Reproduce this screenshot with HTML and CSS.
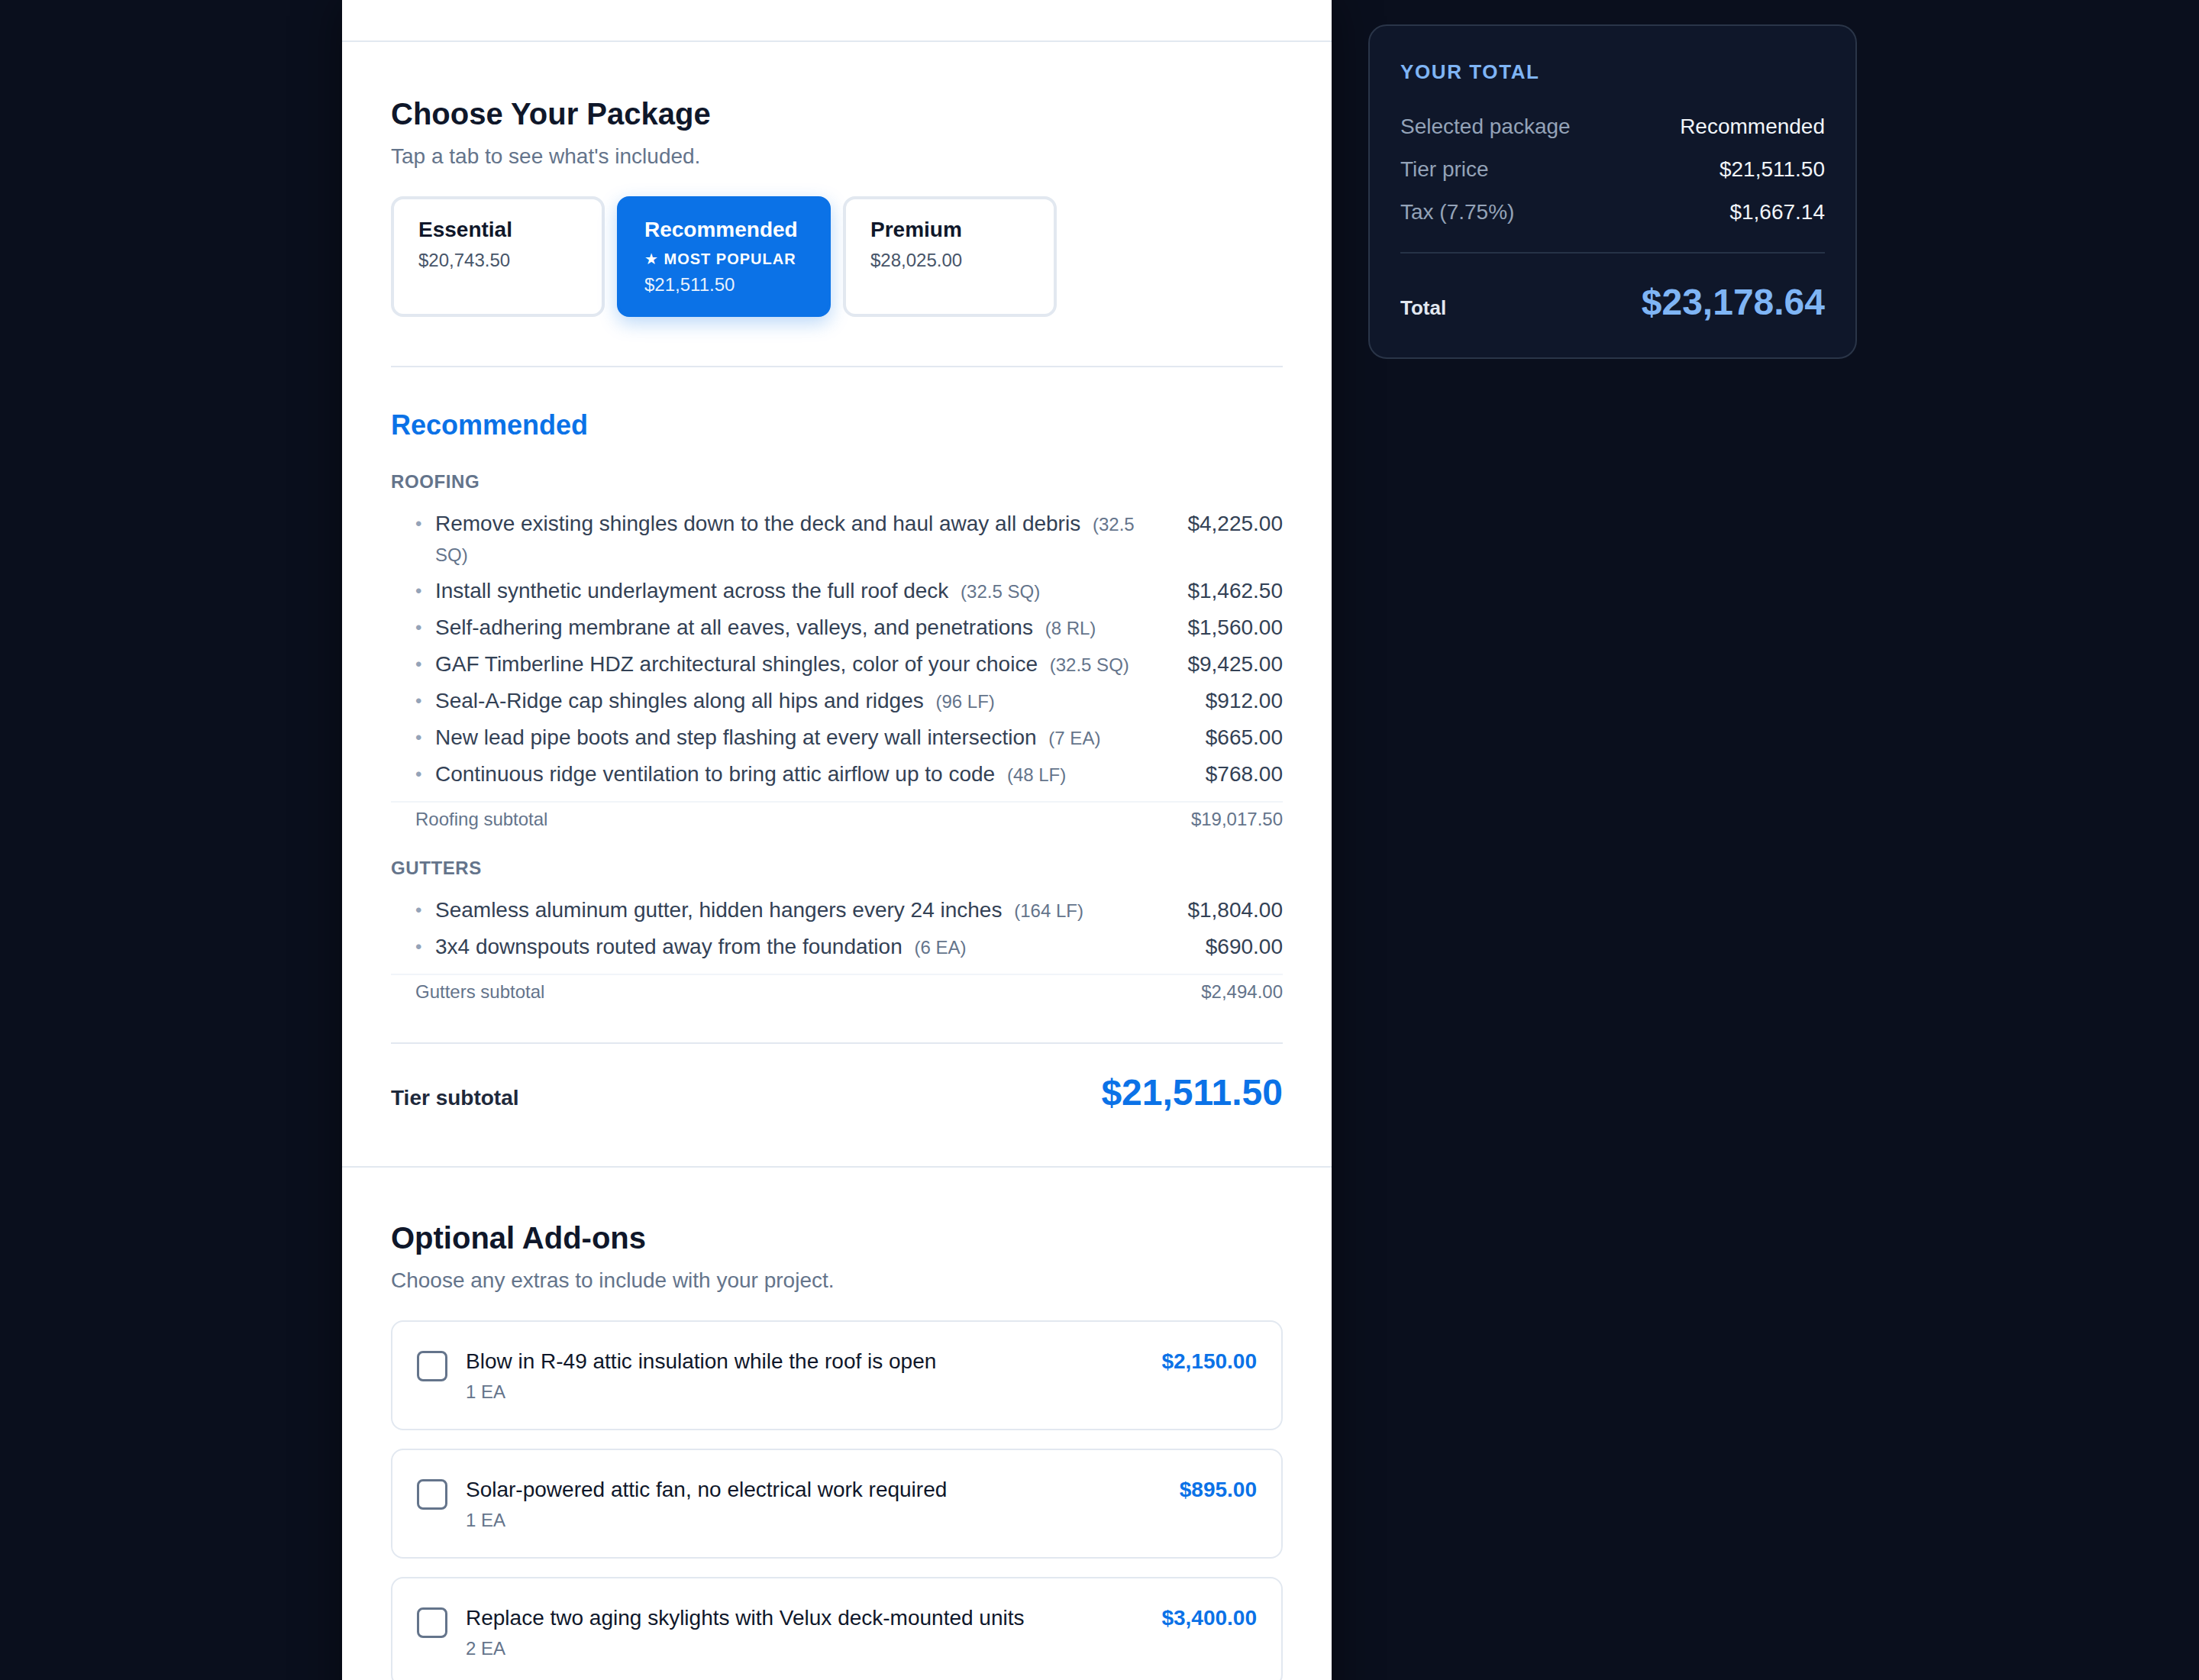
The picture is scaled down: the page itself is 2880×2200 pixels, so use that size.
FILE: index.html
```html
<!DOCTYPE html>
<html lang="en">
<head>
<meta charset="utf-8">
<title>Choose Your Package</title>
<link rel="stylesheet" href="styles.css">
</head>
<body>
<div class="page">
  <main class="panel">
    <div class="section-top"></div>

    <section class="section section-package">
      <h2 class="section-title">Choose Your Package</h2>
      <p class="section-sub">Tap a tab to see what's included.</p>

      <div class="tabs">
        <div class="tab">
          <div class="tab-title">Essential</div>
          <div class="tab-price">$20,743.50</div>
        </div>
        <div class="tab tab-active">
          <div class="tab-title">Recommended</div>
          <div class="tab-badge">★ MOST POPULAR</div>
          <div class="tab-price">$21,511.50</div>
        </div>
        <div class="tab">
          <div class="tab-title">Premium</div>
          <div class="tab-price">$28,025.00</div>
        </div>
      </div>

      <div class="details">
        <h3 class="tier-name">Recommended</h3>

        <div class="category">
          <div class="cat-label">Roofing</div>
          <ul class="items">
            <li class="item"><span class="bullet">•</span><span class="item-text">Remove existing shingles down to the deck and haul away all debris <span class="qty">(32.5 SQ)</span></span><span class="price">$4,225.00</span></li>
            <li class="item"><span class="bullet">•</span><span class="item-text">Install synthetic underlayment across the full roof deck <span class="qty">(32.5 SQ)</span></span><span class="price">$1,462.50</span></li>
            <li class="item"><span class="bullet">•</span><span class="item-text">Self-adhering membrane at all eaves, valleys, and penetrations <span class="qty">(8 RL)</span></span><span class="price">$1,560.00</span></li>
            <li class="item"><span class="bullet">•</span><span class="item-text">GAF Timberline HDZ architectural shingles, color of your choice <span class="qty">(32.5 SQ)</span></span><span class="price">$9,425.00</span></li>
            <li class="item"><span class="bullet">•</span><span class="item-text">Seal-A-Ridge cap shingles along all hips and ridges <span class="qty">(96 LF)</span></span><span class="price">$912.00</span></li>
            <li class="item"><span class="bullet">•</span><span class="item-text">New lead pipe boots and step flashing at every wall intersection <span class="qty">(7 EA)</span></span><span class="price">$665.00</span></li>
            <li class="item"><span class="bullet">•</span><span class="item-text">Continuous ridge ventilation to bring attic airflow up to code <span class="qty">(48 LF)</span></span><span class="price">$768.00</span></li>
          </ul>
          <div class="subtotal"><span>Roofing subtotal</span><span>$19,017.50</span></div>
        </div>

        <div class="category">
          <div class="cat-label">Gutters</div>
          <ul class="items">
            <li class="item"><span class="bullet">•</span><span class="item-text">Seamless aluminum gutter, hidden hangers every 24 inches <span class="qty">(164 LF)</span></span><span class="price">$1,804.00</span></li>
            <li class="item"><span class="bullet">•</span><span class="item-text">3x4 downspouts routed away from the foundation <span class="qty">(6 EA)</span></span><span class="price">$690.00</span></li>
          </ul>
          <div class="subtotal"><span>Gutters subtotal</span><span>$2,494.00</span></div>
        </div>

        <div class="tier-total">
          <span class="tier-label">Tier subtotal</span>
          <span class="tier-amount">$21,511.50</span>
        </div>
      </div>
    </section>

    <section class="section">
      <h2 class="section-title">Optional Add-ons</h2>
      <p class="section-sub">Choose any extras to include with your project.</p>

      <div class="addons">
        <div class="addon">
          <span class="checkbox"></span>
          <div class="addon-body">
            <div class="addon-title">Blow in R-49 attic insulation while the roof is open</div>
            <div class="addon-qty">1 EA</div>
          </div>
          <span class="addon-price">$2,150.00</span>
        </div>
        <div class="addon">
          <span class="checkbox"></span>
          <div class="addon-body">
            <div class="addon-title">Solar-powered attic fan, no electrical work required</div>
            <div class="addon-qty">1 EA</div>
          </div>
          <span class="addon-price">$895.00</span>
        </div>
        <div class="addon">
          <span class="checkbox"></span>
          <div class="addon-body">
            <div class="addon-title">Replace two aging skylights with Velux deck-mounted units</div>
            <div class="addon-qty">2 EA</div>
          </div>
          <span class="addon-price">$3,400.00</span>
        </div>
      </div>
    </section>
  </main>

  <aside class="sidebar">
    <div class="summary">
      <div class="summary-title">YOUR TOTAL</div>
      <div class="summary-rows">
        <div class="summary-row"><span class="summary-label">Selected package</span><span class="summary-value">Recommended</span></div>
        <div class="summary-row"><span class="summary-label">Tier price</span><span class="summary-value">$21,511.50</span></div>
        <div class="summary-row"><span class="summary-label">Tax (7.75%)</span><span class="summary-value">$1,667.14</span></div>
      </div>
      <div class="summary-total">
        <span class="summary-total-label">Total</span>
        <span class="summary-total-amount">$23,178.64</span>
      </div>
    </div>
  </aside>
</div>
</body>
</html>
```

FILE: styles.css
```css
* {
  box-sizing: border-box;
}

html,
body {
  margin: 0;
  padding: 0;
  height: 2200px;
  overflow: hidden;
}

body {
  background: #0a0f1d;
  font-family: "Liberation Sans", Arial, "DejaVu Sans", sans-serif;
  color: #0f172a;
}

.page {
  width: 1984px;
  margin: 0 auto;
  display: grid;
  grid-template-columns: 1296px 640px;
  gap: 48px;
  align-items: start;
}

/* ---------- main panel ---------- */

.panel {
  background: #ffffff;
  min-height: 2200px;
  box-shadow: 0 0 60px rgba(0, 0, 0, 0.45);
}

.section-top {
  height: 55px;
  border-bottom: 2px solid #e2e8f0;
}

.section {
  padding: 64px;
  border-bottom: 2px solid #e2e8f0;
}

.section-package {
  padding-top: 66px;
}

.section-title {
  margin: 0 0 8px;
  font-size: 40px;
  line-height: 56px;
  font-weight: 700;
  color: #0f172a;
}

.section-sub {
  margin: 0;
  font-size: 28px;
  line-height: 40px;
  color: #64748b;
}

/* ---------- tabs ---------- */

.tabs {
  display: flex;
  gap: 16px;
  margin-top: 32px;
}

.tab {
  width: 280px;
  padding: 22px 32px 20px;
  border: 4px solid #e2e8f0;
  border-radius: 16px;
  background: #ffffff;
}

.tab-title {
  margin-bottom: 4px;
  font-size: 28px;
  line-height: 36px;
  font-weight: 700;
  color: #0f172a;
}

.tab-badge {
  font-size: 20px;
  line-height: 32px;
  font-weight: 700;
  letter-spacing: 1px;
  color: #ffffff;
}

.tab-price {
  font-size: 24px;
  line-height: 36px;
  color: #475569;
}

.tab-active {
  background: #0b72e7;
  border-color: #0b72e7;
  box-shadow: 0 8px 24px rgba(11, 114, 231, 0.28);
}

.tab-active .tab-title {
  color: #ffffff;
}

.tab-active .tab-price {
  color: rgba(255, 255, 255, 0.92);
}

/* ---------- details ---------- */

.details {
  margin-top: 64px;
  padding-top: 50px;
  border-top: 2px solid #e2e8f0;
}

.tier-name {
  margin: 0 0 32px;
  font-size: 36px;
  line-height: 52px;
  font-weight: 700;
  color: #0b72e7;
}

.category + .category {
  margin-top: 32px;
}

.cat-label {
  font-size: 24px;
  line-height: 32px;
  font-weight: 700;
  letter-spacing: 0.6px;
  text-transform: uppercase;
  color: #64748b;
}

.items {
  list-style: none;
  margin: 15px 0 0;
  padding: 0 0 0 32px;
}

.item {
  display: flex;
  align-items: flex-start;
  padding: 4px 0;
}

.bullet {
  flex: none;
  width: 26px;
  font-size: 24px;
  line-height: 40px;
  color: #94a3b8;
}

.item-text {
  flex: 1;
  min-width: 0;
  font-size: 28px;
  line-height: 40px;
  color: #334155;
}

.qty {
  margin-left: 8px;
  font-size: 24px;
  line-height: 1;
  color: #64748b;
}

.price {
  flex: none;
  margin-left: 32px;
  font-size: 28px;
  line-height: 40px;
  color: #334155;
  white-space: nowrap;
}

.subtotal {
  display: flex;
  justify-content: space-between;
  margin-top: 11px;
  padding: 6px 0 0 32px;
  border-top: 2px solid #f1f5f9;
  font-size: 24px;
  line-height: 32px;
  color: #64748b;
}

.tier-total {
  display: flex;
  justify-content: space-between;
  align-items: baseline;
  margin-top: 50px;
  padding-top: 32px;
  border-top: 2px solid #e2e8f0;
}

.tier-label {
  font-size: 28px;
  line-height: 40px;
  font-weight: 700;
  color: #1e293b;
}

.tier-amount {
  font-size: 48px;
  line-height: 64px;
  font-weight: 700;
  color: #0b72e7;
}

/* ---------- add-ons ---------- */

.addons {
  display: flex;
  flex-direction: column;
  gap: 24px;
  margin-top: 32px;
}

.addon {
  display: flex;
  align-items: flex-start;
  gap: 24px;
  padding: 32px;
  border: 2px solid #e2e8f0;
  border-radius: 16px;
  background: #ffffff;
}

.checkbox {
  flex: none;
  width: 40px;
  height: 40px;
  margin-top: 6px;
  border: 3px solid #64748b;
  border-radius: 8px;
  background: #ffffff;
}

.addon-body {
  flex: 1;
  min-width: 0;
}

.addon-title {
  font-size: 28px;
  line-height: 40px;
  color: #0f172a;
}

.addon-qty {
  margin-top: 4px;
  font-size: 24px;
  line-height: 32px;
  color: #64748b;
}

.addon-price {
  flex: none;
  font-size: 28px;
  line-height: 40px;
  font-weight: 700;
  color: #0b72e7;
  white-space: nowrap;
}

/* ---------- sidebar ---------- */

.sidebar {
  padding-top: 32px;
}

.summary {
  padding: 40px;
  background: #0f172a;
  border: 2px solid #2a3548;
  border-radius: 24px;
}

.summary-title {
  margin-bottom: 32px;
  font-size: 26px;
  line-height: 40px;
  font-weight: 700;
  letter-spacing: 1.6px;
  color: #7fb5f5;
}

.summary-rows {
  display: flex;
  flex-direction: column;
  gap: 16px;
  padding-bottom: 32px;
  border-bottom: 2px solid #263246;
}

.summary-row {
  display: flex;
  justify-content: space-between;
  font-size: 28px;
  line-height: 40px;
}

.summary-label {
  color: #94a3b8;
}

.summary-value {
  color: #f1f5f9;
}

.summary-total {
  display: flex;
  justify-content: space-between;
  align-items: baseline;
  padding-top: 32px;
}

.summary-total-label {
  font-size: 26px;
  line-height: 40px;
  font-weight: 700;
  color: #e2e8f0;
}

.summary-total-amount {
  font-size: 48px;
  line-height: 64px;
  font-weight: 700;
  color: #7fb5f5;
}
```
